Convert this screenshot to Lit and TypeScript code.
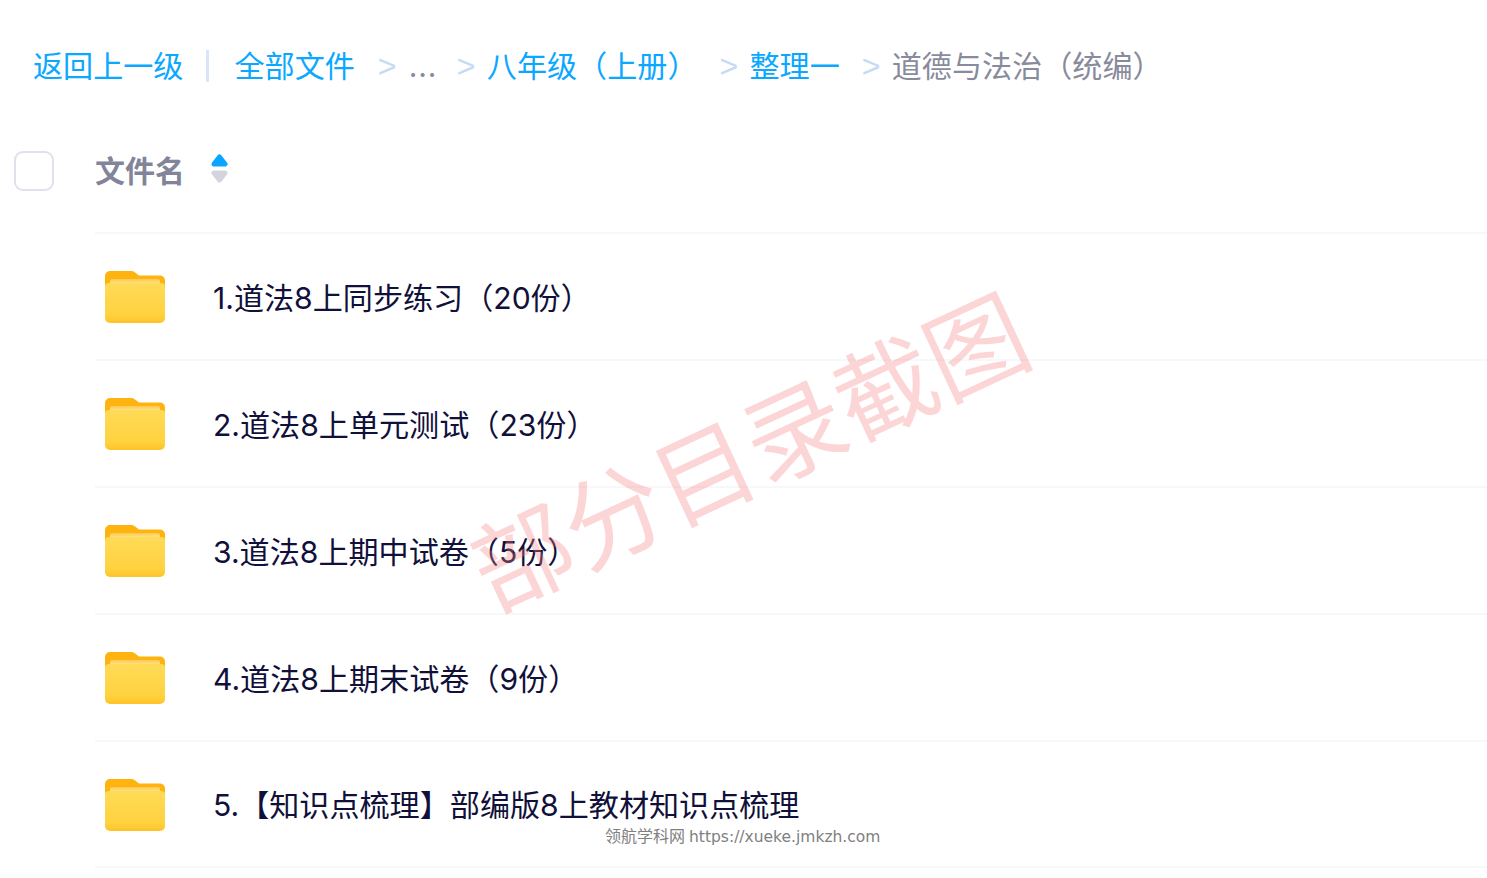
import { LitElement, html, css, svg } from "lit";
import { customElement } from "lit/decorators.js";

const rows = [
  "1.道法8上同步练习（20份）",
  "2.道法8上单元测试（23份）",
  "3.道法8上期中试卷（5份）",
  "4.道法8上期末试卷（9份）",
  "5.【知识点梳理】部编版8上教材知识点梳理",
];

const folder = svg`<svg class="folder" viewBox="0 0 60 54" width="60" height="54">
  <defs>
    <linearGradient id="fb" x1="0" y1="0" x2="0" y2="1">
      <stop offset="0" stop-color="#ffdb57"/><stop offset="0.8" stop-color="#ffd23f"/><stop offset="1" stop-color="#ffc327"/>
    </linearGradient>
    <linearGradient id="fs" x1="0" y1="0" x2="0" y2="1">
      <stop offset="0" stop-color="#ffc94a"/><stop offset="1" stop-color="#ffeaa6"/>
    </linearGradient>
  </defs>
  <path d="M0 6a5 5 0 0 1 5-5h21c2 0 3 .6 4.400 1.800L34 5.500h21a5 5 0 0 1 5 5V28H0Z" fill="#ffb30f"/>
  <rect x="5" y="9" width="50" height="6" rx="2" fill="url(#fs)"/>
  <path d="M0 17a4 4 0 0 1 4-4h52a4 4 0 0 1 4 4v31a5 5 0 0 1-5 5H5a5 5 0 0 1-5-5Z" fill="url(#fb)"/>
</svg>`;

@customElement("app-root")
export class AppRoot extends LitElement {
  static styles = css`
    :host {
      display: block;
      position: relative;
      width: 1487px;
      height: 878px;
      overflow: hidden;
      background: #fff;
      font-family: Inter, "Noto Sans CJK SC", sans-serif;
    }
    .crumbs {
      display: flex;
      align-items: center;
      height: 44px;
      padding: 44px 0 0 33px;
      font-size: 30.1px;
      line-height: 44px;
      color: #0aa8ff;
      white-space: nowrap;
    }
    .bar { width: 3px; height: 32px; background: #d9e6f7; margin: 0 25px 0 23px; }
    .sep { color: #c6daf5; font-size: 32px; font-family: "Liberation Sans", sans-serif; width: 18px; }
    .sep1 { margin-left: 23px; margin-right: 13px; }
    .dots { color: #888b9c; width: 27px; font-size: 30px; letter-spacing: 0.8px; }
    .sep2 { margin-left: 21px; margin-right: 12px; }
    .sep3 { margin-left: 22px; margin-right: 12px; }
    .sep4 { margin-left: 22px; margin-right: 12px; }
    .cur { color: #888b9c; }
    .head {
      display: flex;
      align-items: center;
      height: 40px;
      margin-top: 63px;
      padding-left: 14px;
    }
    .check {
      width: 40px;
      height: 40px;
      box-sizing: border-box;
      border: 2px solid #dfe1ec;
      border-radius: 9px;
    }
    .name {
      margin-left: 41px;
      font-size: 30px;
      font-weight: 700;
      color: #82859a;
      line-height: 40px;
    }
    .sort { margin-left: 26px; margin-top: -5px; display: block; }
    .list { margin: 41px 0 0 95px; }
    .row {
      display: flex;
      align-items: center;
      height: 127px;
      box-sizing: border-box;
      border-top: 2px solid #f7f8fa;
      padding-left: 10px;
    }
    .row:last-child { border-bottom: 2px solid #f7f8fa; height: 128px; }
    .folder { flex: none; display: block; margin-top: 1px; }
    .label {
      margin-left: 48px;
      margin-top: 2px;
      font-size: 30.1px;
      line-height: 40px;
      color: #10103a;
      white-space: nowrap;
    }
    .mark {
      position: absolute;
      left: 447px;
      top: 387px;
      font-size: 100px;
      line-height: 120px;
      color: rgba(245, 130, 130, 0.33);
      white-space: nowrap;
      transform: rotate(-25deg);
      font-family: "Noto Sans CJK SC", sans-serif;
      font-weight: 400;
      pointer-events: none;
    }
    .site {
      position: absolute;
      left: 605px;
      top: 826px;
      font-size: 16px;
      line-height: 22px;
      color: #808080;
      font-family: "DejaVu Sans", "Noto Sans CJK SC", sans-serif;
      white-space: nowrap;
    }
    .url { font-size: 15.5px; margin-left: 4px; }
  `;

  render() {
    return html`
      <div class="crumbs">
        <span>返回上一级</span>
        <span class="bar"></span>
        <span>全部文件</span>
        <span class="sep sep1">&gt;</span>
        <span class="dots">...</span>
        <span class="sep sep2">&gt;</span>
        <span>八年级（上册）</span>
        <span class="sep sep3">&gt;</span>
        <span>整理一</span>
        <span class="sep sep4">&gt;</span>
        <span class="cur">道德与法治（统编）</span>
      </div>
      <div class="head">
        <div class="check"></div>
        <div class="name">文件名</div>
        <svg class="sort" width="17" height="31" viewBox="0 0 17 31">
          <path d="M8.500 4 14 11H3Z" fill="#0aa5ff" stroke="#0aa5ff" stroke-width="5" stroke-linejoin="round"/>
          <path d="M3 20H14L8.500 27Z" fill="#d2d5de" stroke="#d2d5de" stroke-width="5" stroke-linejoin="round"/>
        </svg>
      </div>
      <div class="list">
        ${rows.map((r) => html`<div class="row">${folder}<span class="label">${r}</span></div>`)}
      </div>
      <div class="mark">部分目录截图</div>
      <div class="site">领航学科网<span class="url">https://xueke.jmkzh.com</span></div>
    `;
  }
}
